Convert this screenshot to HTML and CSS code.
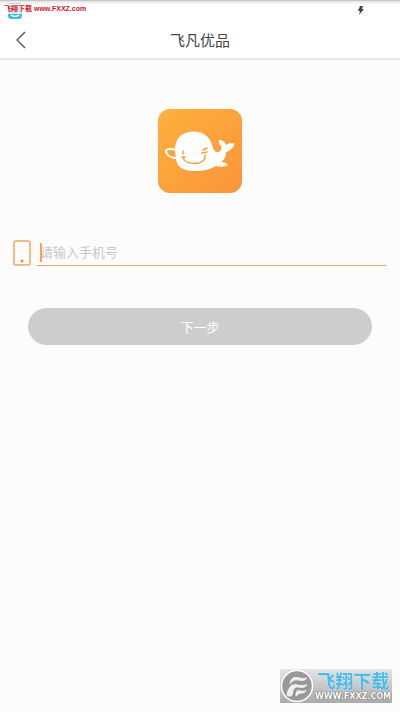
FILE: index.html
```html
<!DOCTYPE html>
<html lang="zh-CN">
<head>
<meta charset="utf-8">
<meta name="viewport" content="width=device-width, initial-scale=1">
<title>飞凡优品</title>
<link rel="stylesheet" href="styles.css">
</head>
<body>
<header class="top">
  <div class="status">
    <div class="source">
      <svg class="source-icon" viewBox="0 0 14 16" aria-hidden="true"><path d="M1 .5h12" stroke="#a9d8ee"/><path d="M0 11h14v1q0 4-3 4H3q-3 0-3-4z" fill="#45b9df"/><path d="M0 4h14v7H0z" fill="#d5eef7"/><path d="M3 12q4 3 8 0" fill="none" stroke="#fff" stroke-width="1.5"/></svg>
      <span class="source-text">飞翔下载 www.FXXZ.com</span>
    </div>
    <svg class="bolt" viewBox="0 0 6 9" aria-hidden="true"><path d="M2 0h3L4 3h2L1 9l1-4H0z" fill="#444"/></svg>
  </div>
  <div class="nav">
    <button class="back" type="button" aria-label="返回"><svg viewBox="0 0 10 18" aria-hidden="true"><path d="M9 1L1 9l8 8" fill="none" stroke="#484848" stroke-width="1.2"/></svg></button>
    <h1 class="title">飞凡优品</h1>
  </div>
</header>
<main class="main">
  <svg class="logo" viewBox="0 0 84 84" role="img" aria-label="飞凡优品">
    <defs><linearGradient id="sun" x1="0" y1="0" x2="1" y2="1"><stop offset="0" stop-color="#fdb13c"/><stop offset="1" stop-color="#fb943a"/></linearGradient></defs>
    <rect width="84" height="84" rx="12" fill="url(#sun)"/>
    <path d="M17 41C17 29 24 22.500 36 22.500C45 22.500 50 27 53 33C55 38 56 43 59 43C62 43 64 41 63 37C61 35 60 33 61 31C65 31 67 33 68 36C70 34 73 34 76.500 34.500C75 40 72 42 68 43C68 48 66 51 63 53C66 53 69 54 70 56C67 58 62 58 58 57C53 60 46 62 37 62C27 62 19 59 18 50Z" fill="#fff"/>
    <path d="M18 41C12 39 7 40 8 43C9 47 14 49 19 49" fill="none" stroke="#fff" stroke-width="2"/>
    <path d="M25 42V45M25 48C26 56 44 57 47 49V46M24 48h3M45 41l4-2M44 44l5-1" fill="none" stroke="#fa9c38" stroke-width="1.500" stroke-linecap="round"/>
  </svg>
  <form class="form">
    <div class="phone-row">
      <label class="phone-label" for="phone" aria-label="手机号"><svg viewBox="0 0 18 26" aria-hidden="true"><rect x="1" y="1" width="16" height="24" rx="2" fill="none" stroke="#f0a45c" stroke-width="1.5"/><circle cx="9" cy="21" r="1.5" fill="#ec8f3c"/></svg></label>
      <div class="field">
        <span class="caret"></span>
        <input id="phone" class="phone" type="tel" placeholder="请输入手机号">
      </div>
    </div>
    <button class="next" type="button">下一步</button>
  </form>
</main>
<aside class="mark">
  <svg class="mark-icon" viewBox="0 0 34 34" aria-hidden="true"><circle cx="17" cy="17" r="15.5" fill="#999" stroke="#fff" stroke-width="1.5"/><path d="M9 17C9 9 14 6 19 8C23 9 26 9 28 7C27 12 23 13 19 12C15 11 12 12 9 17ZM6 26C8 17 12 14 17 15C22 16 25 16 28 14C27 19 23 20 19 19C14 18 14 21 13 26C11 29 8 28 6 26ZM15 28C15 22 17 20 20 21C23 22 25 21 27 20C26 25 22 25 20 25C18 25 18 28 15 28Z" fill="#eee" stroke="#777" stroke-width=".5"/></svg>
  <div class="mark-words">
    <span class="mark-name">飞翔下载</span>
    <span class="mark-url">WWW.FXXZ.COM</span>
  </div>
</aside>
</body>
</html>
```
FILE: styles.css
```css
* { box-sizing: border-box; }
body {
  margin: 0;
  min-height: 100vh;
  display: flex;
  flex-direction: column;
  background: #fcfcfc;
  font-family: "Liberation Sans", "Noto Sans CJK SC", sans-serif;
}
button, input { font: inherit; border: 0; padding: 0; background: none; }
svg { display: block; }
.top {
  background: #fff;
  border-top: 1px solid #c6c6c6;
  border-bottom: 2px solid #e6e6e6;
}
.status {
  height: 20px;
  display: flex;
  justify-content: space-between;
  padding: 0 36px 0 4px;
  background: linear-gradient(#e4e4e4, #fff 4px);
}
.source { position: relative; }
.source-icon { position: absolute; left: 4px; top: 2px; width: 14px; height: 16px; }
.source-text {
  position: relative;
  display: block;
  font: bold 7px/16px "Liberation Sans", "Noto Sans CJK SC", sans-serif;
  color: #cf1620;
  white-space: nowrap;
}
.bolt { width: 6px; height: 9px; margin-top: 5px; }
.nav {
  height: 37px;
  display: grid;
  grid-template-columns: 44px 1fr 44px;
  align-items: center;
}
.back { height: 36px; padding-left: 16px; }
.back svg { width: 10px; height: 18px; }
.title {
  margin: 0;
  padding-top: 2px;
  text-align: center;
  font-size: 15px;
  line-height: 24px;
  font-weight: 400;
  color: #444;
}
.main { flex: 1; padding-top: 49px; }
.logo { width: 84px; height: 84px; margin: 0 auto; }
.form { padding: 46px 14px 0 13px; }
.phone-row { display: flex; gap: 6px; align-items: flex-start; }
.phone-label svg { width: 18px; height: 26px; margin-top: 1px; }
.field {
  position: relative;
  flex: 1;
  height: 27px;
  display: flex;
  padding-left: 3px;
  border-bottom: 1px solid #e6a663;
}
.caret { position: absolute; left: 3px; top: 4px; width: 2px; height: 19px; background: #f1a561; }
.phone { flex: 1; min-width: 0; height: 27px; font-size: 13px; color: #333; outline: 0; }
.phone::placeholder { color: #c8c8c8; opacity: 1; }
.next {
  display: block;
  width: calc(100% - 29px);
  height: 37px;
  margin: 42px 0 0 15px;
  border-radius: 19px;
  background: #cdcdcd;
  color: #fff;
  font-size: 13px;
}
.mark {
  align-self: flex-end;
  display: flex;
  width: 112px;
  height: 34px;
  margin: 0 8px 9px 0;
  background: linear-gradient(#e5e5e5, #aaa);
}
.mark-icon { flex: none; width: 34px; height: 34px; }
.mark-words { display: flex; flex-direction: column; align-items: center; flex: 1; }
.mark-name {
  font: bold 18px/22px "Noto Sans CJK SC", sans-serif;
  color: #4abce8;
  text-shadow: 0 0 1px #fff;
  white-space: nowrap;
}
.mark-url {
  font: bold 8px/12px "DejaVu Sans", sans-serif;
  color: #fff;
  text-shadow: 0 0 1px #555, 0 0 1px #555;
  white-space: nowrap;
}
```
